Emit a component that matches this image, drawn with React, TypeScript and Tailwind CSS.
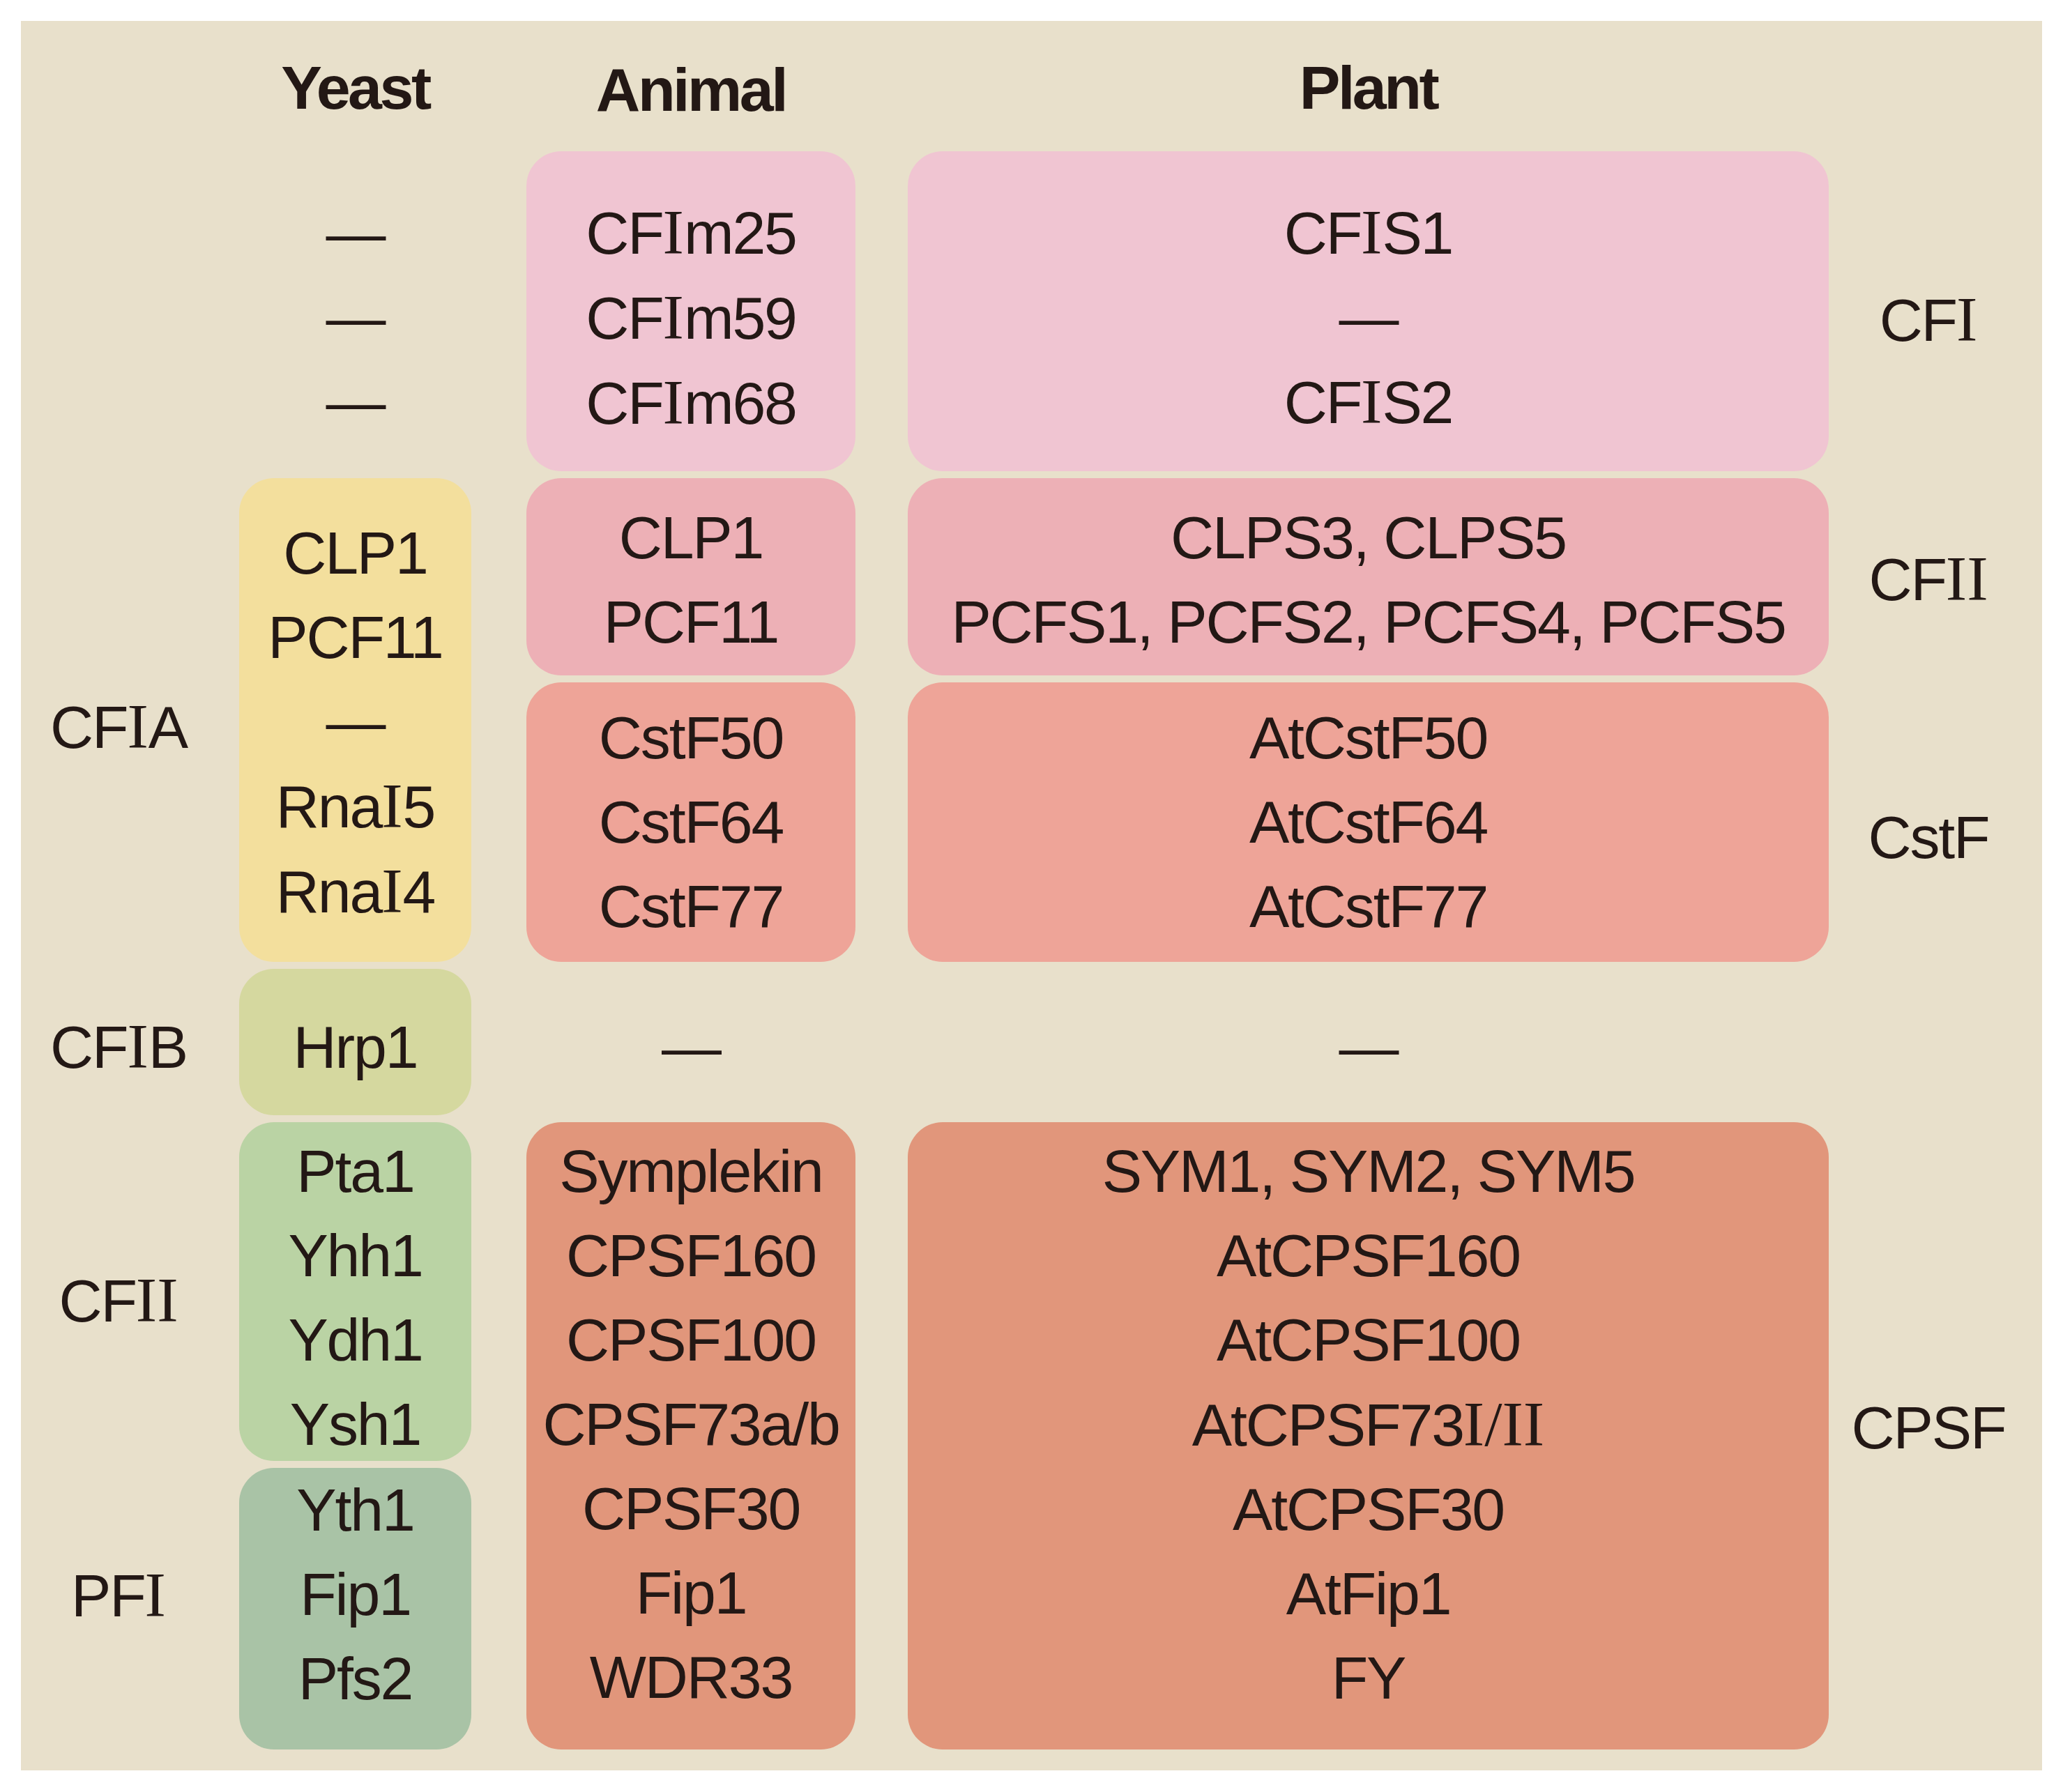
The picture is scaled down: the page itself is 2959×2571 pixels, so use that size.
import type { ReactNode } from 'react'

const ink = 'text-[#231815]'

// Roman numerals are set in a serif face in the figure
function R({ children }: { children: ReactNode }) {
  return <span className="font-[family-name:Liberation_Serif,Times_New_Roman,serif] text-[1.06em] tracking-normal">{children}</span>
}

function Lines({ items, className = '' }: { items: ReactNode[]; className?: string }) {
  return (
    <div className={`flex flex-col items-center leading-[121px] ${className}`}>
      {items.map((it, i) => (
        <div key={i} className="whitespace-nowrap">{it}</div>
      ))}
    </div>
  )
}

function Box({ bg, className = '', children }: { bg: string; className?: string; children: ReactNode }) {
  return (
    <div className={`rounded-[50px] flex flex-col ${bg} ${className}`}>
      {children}
    </div>
  )
}

function Label({ children, className = '' }: { children: ReactNode; className?: string }) {
  return <div className={`flex items-center justify-center whitespace-nowrap ${className}`}>{children}</div>
}

export default function App() {
  return (
    <div className="w-[2959px] h-[2571px] bg-white p-[30px] font-[family-name:Liberation_Sans,Arial,sans-serif]">
      <div
        className={`w-[2899px] h-[2510px] bg-[#e8e0cb] grid grid-cols-[313px_412px_547px_1321px_306px] grid-rows-[177px_459px_283px_401px_210px_486px_404px] gap-y-[10px] pb-[30px] text-[86px] tracking-[-0.025em] ${ink}`}
      >
        {/* header */}
        <div className="col-start-2 row-start-1 w-[333px] flex items-center justify-center pt-[14px] font-bold text-[88px] tracking-[-0.04em]">
          Yeast
        </div>
        <div className="col-start-3 row-start-1 w-[472px] flex items-center justify-center pt-[20px] font-bold text-[88px] tracking-[-0.04em]">
          Animal
        </div>
        <div className="col-start-4 row-start-1 flex items-center justify-center pt-[14px] font-bold text-[88px] tracking-[-0.04em]">
          Plant
        </div>

        {/* CFI */}
        <div className="col-start-2 row-start-2 w-[333px] flex flex-col justify-center pt-[18px]">
          <Lines items={['—', '—', '—']} className="leading-[119px]" />
        </div>
        <Box bg="bg-[#f0c5d2]" className="col-start-3 row-start-2 w-[472px] justify-center pt-[18px]">
          <Lines items={[<>CF<R>I</R>m25</>, <>CF<R>I</R>m59</>, <>CF<R>I</R>m68</>]} className="leading-[119px]" />
        </Box>
        <Box bg="bg-[#f0c5d2]" className="col-start-4 row-start-2 justify-center pt-[18px]">
          <Lines items={[<>CF<R>I</R>S1</>, '—', <>CF<R>I</R>S2</>]} className="leading-[119px]" />
        </Box>
        <Label className="col-start-5 row-start-2 pr-[20px] pt-[26px]">
          CF<R>I</R>
        </Label>

        {/* CFIA */}
        <Label className="col-start-1 row-start-3 row-span-2 pr-[33px] pt-[20px]">
          CF<R>I</R>A
        </Label>
        <Box bg="bg-[#f3df9d]" className="col-start-2 row-start-3 row-span-2 w-[333px] justify-center pt-[6px]">
          <Lines items={['CLP1', 'PCF11', '—', <>Rna<R>I</R>5</>, <>Rna<R>I</R>4</>]} />
        </Box>

        {/* CFII */}
        <Box bg="bg-[#edb0b6]" className="col-start-3 row-start-3 w-[472px] justify-center pt-[8px]">
          <Lines items={['CLP1', 'PCF11']} className="leading-[117px]" />
        </Box>
        <Box bg="bg-[#edb0b6]" className="col-start-4 row-start-3 justify-center pt-[8px]">
          <Lines items={['CLPS3, CLPS5', 'PCFS1, PCFS2, PCFS4, PCFS5']} className="leading-[117px]" />
        </Box>
        <Label className="col-start-5 row-start-3 pr-[20px] pt-[8px]">
          CF<R>II</R>
        </Label>

        {/* CstF */}
        <Box bg="bg-[#eea498]" className="col-start-3 row-start-4 w-[472px] justify-center">
          <Lines items={['CstF50', 'CstF64', 'CstF77']} />
        </Box>
        <Box bg="bg-[#eea498]" className="col-start-4 row-start-4 justify-center">
          <Lines items={['AtCstF50', 'AtCstF64', 'AtCstF77']} />
        </Box>
        <Label className="col-start-5 row-start-4 pr-[20px] pt-[44px]">CstF</Label>

        {/* CFIB */}
        <Label className="col-start-1 row-start-5 pr-[33px] pt-[14px]">
          CF<R>I</R>B
        </Label>
        <Box bg="bg-[#d5d89f]" className="col-start-2 row-start-5 w-[333px] items-center justify-center pt-[14px]">
          Hrp1
        </Box>
        <Label className="col-start-3 row-start-5 w-[472px] pt-[14px]">—</Label>
        <Label className="col-start-4 row-start-5 pt-[14px]">—</Label>

        {/* yeast CFII / PFI */}
        <Label className="col-start-1 row-start-6 pr-[33px] pt-[26px]">
          CF<R>II</R>
        </Label>
        <Box bg="bg-[#bad3a4]" className="col-start-2 row-start-6 w-[333px] pt-[10px]">
          <Lines items={['Pta1', 'Yhh1', 'Ydh1', 'Ysh1']} />
        </Box>
        <Label className="col-start-1 row-start-7 pr-[33px] pb-[38px]">
          PF<R>I</R>
        </Label>
        <Box bg="bg-[#a9c3a6]" className="col-start-2 row-start-7 w-[333px]">
          <Lines items={['Yth1', 'Fip1', 'Pfs2']} />
        </Box>

        {/* CPSF */}
        <Box bg="bg-[#e1967b]" className="col-start-3 row-start-6 row-span-2 w-[472px] pt-[10px]">
          <Lines
            items={['Symplekin', 'CPSF160', 'CPSF100', 'CPSF73a/b', 'CPSF30', 'Fip1', 'WDR33']}
          />
        </Box>
        <Box bg="bg-[#e1967b]" className="col-start-4 row-start-6 row-span-2 pt-[10px]">
          <Lines
            items={[
              'SYM1, SYM2, SYM5',
              'AtCPSF160',
              'AtCPSF100',
              <>AtCPSF73<R>I/II</R></>,
              'AtCPSF30',
              'AtFip1',
              'FY',
            ]}
          />
        </Box>
        <Label className="col-start-5 row-start-6 row-span-2 pr-[20px] pb-[24px]">CPSF</Label>
      </div>
    </div>
  )
}
